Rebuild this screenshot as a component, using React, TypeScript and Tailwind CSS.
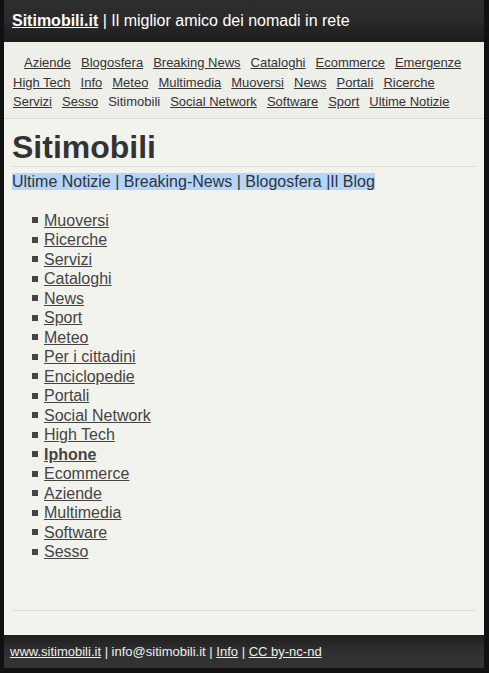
const navLinks = [
  "Aziende", "Blogosfera", "Breaking News", "Cataloghi", "Ecommerce", "Emergenze",
  "High Tech", "Info", "Meteo", "Multimedia", "Muoversi", "News", "Portali", "Ricerche",
  "Servizi", "Sesso", "Sitimobili", "Social Network", "Software", "Sport", "Ultime Notizie",
];

const listItems = [
  "Muoversi", "Ricerche", "Servizi", "Cataloghi", "News", "Sport", "Meteo", "Per i cittadini",
  "Enciclopedie", "Portali", "Social Network", "High Tech", "Iphone", "Ecommerce", "Aziende",
  "Multimedia", "Software", "Sesso",
];

export default function App() {
  return (
    <div className="min-h-[673px] bg-[#111111] pl-[4px] pr-[5px] font-['Liberation_Sans',Arial,sans-serif]">
      {/* header */}
      <header className="h-[42px] bg-gradient-to-b from-[#2e2e2e] via-[#2a2a2a] to-[#1c1c1c] px-[8px] flex items-center text-[16px] text-white">
        <span>
          <a href="#" className="font-bold underline">Sitimobili.it</a> | Il miglior amico dei nomadi in rete
        </span>
      </header>

      {/* nav */}
      <nav className="bg-[#efefea] border-b border-[#dcdcd6] pl-[9px] pr-[8px] pt-[11px] pb-[6px]">
        <div className="flex flex-wrap gap-x-[10px] text-[13px] leading-[19.5px] text-[#333]">
          <span className="w-px" />
          {navLinks.map((l) =>
            l === "Sitimobili" ? (
              <span key={l}>{l}</span>
            ) : (
              <a key={l} href="#" className="underline">{l}</a>
            )
          )}
        </div>
      </nav>

      {/* content */}
      <main className="bg-[#f3f3ee] px-[8px] pt-[10px] h-[516px] flex flex-col">
        <h1 className="text-[32px] font-bold text-[#333] leading-[36px] pb-[1px] border-b border-[#dcdcd6]">
          Sitimobili
        </h1>
        <p className="mt-[5px] text-[16px] leading-[19px] text-[#333]">
          <span className="bg-[#b4d5fe]">Ultime Notizie | Breaking-News | Blogosfera |Il Blog</span>
        </p>
        <ul className="mt-[20px] pl-[32px] text-[16px] leading-[19.5px] text-[#444]">
          {listItems.map((i) => (
            <li key={i} className="flex items-center">
              <span className="w-[6px] h-[6px] bg-[#444] mr-[6px] ml-[-12px]" />
              <a href="#" className={"underline" + (i === "Iphone" ? " font-bold" : "")}>{i}</a>
            </li>
          ))}
        </ul>
        <div className="mt-auto mb-[24px] border-b border-[#dcdcd6]" />
      </main>

      {/* footer */}
      <footer className="h-[33px] bg-gradient-to-b from-[#1e1e1e] via-[#303030] to-[#333333] px-[6px] pt-[2px] flex items-center text-[13px] text-[#eee]">
        <span>
          <a href="#" className="underline">www.sitimobili.it</a> | info@sitimobili.it |{" "}
          <a href="#" className="underline">Info</a> |{" "}
          <a href="#" className="underline">CC by-nc-nd</a>
        </span>
      </footer>
    </div>
  );
}
